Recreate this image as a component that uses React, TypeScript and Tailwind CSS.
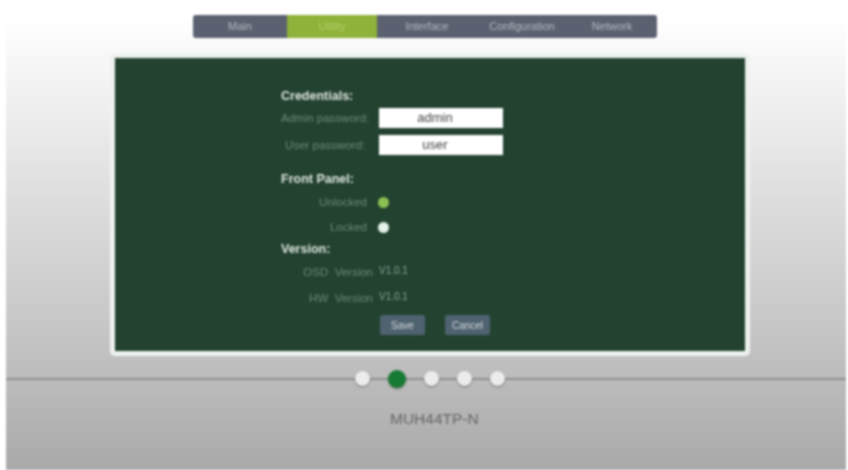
function Label({ children, width = 'w-[86px]' }: { children: React.ReactNode; width?: string }) {
    return <span className={`${width} whitespace-nowrap text-right text-[11.5px] leading-[17px] text-[#6f8a7a]`}>{children}</span>;
}

function Dot({ active }: { active?: boolean }) {
    return (
        <span
            className={
                active
                    ? 'h-[18px] w-[18px] rounded-full bg-[#177a34] shadow-[0_1px_2px_rgba(0,0,0,0.4)]'
                    : 'h-[15px] w-[15px] rounded-full bg-[#ececec] shadow-[0_1px_2px_rgba(0,0,0,0.4)]'
            }
        />
    );
}

export default function App() {
    return (
        <div className="h-[470px] w-[848px] overflow-hidden bg-white font-['Liberation_Sans',sans-serif]">
            <div className="ml-[6px] flex h-[470px] w-[840px] flex-col items-start bg-gradient-to-b from-[#ffffff] from-[4%] via-[#c6c6c6] via-[70%] to-[#a9a9a9] blur-[0.8px]">
                <nav className="ml-[187px] mt-[15px] flex h-[23px] w-[464px] rounded-[3px] bg-[#5b6170] text-[11px] text-[#b4b9c1]">
                    <span className="flex w-[94px] items-center justify-center">Main</span>
                    <span className="flex w-[90px] items-center justify-center bg-[#8fb23a] text-[#b2cf68]">Utility</span>
                    <span className="flex w-[100px] items-center justify-center">Interface</span>
                    <span className="flex w-[90px] items-center justify-center">Configuration</span>
                    <span className="flex w-[90px] items-center justify-center">Network</span>
                </nav>

                <main className="ml-[104px] mt-[15px] h-[303px] w-[640px] rounded-[5px] border-[5px] border-[#eef2ee] bg-[#234230]">
                    <div className="pl-[166px] pt-[31px]">
                        <h2 className="text-[12.5px] font-bold leading-[14px] text-[#dfe6e0]">Credentials:</h2>

                        <div className="mt-[5px] flex items-center">
                            <Label width="w-[84px]">Admin password:</Label>
                            <span className="ml-[14px] flex h-[20px] w-[124px] items-center justify-center bg-white pr-[12px] text-[13px] text-[#444]">admin</span>
                        </div>
                        <div className="mt-[7px] flex items-center">
                            <Label width="w-[84px]">User password:</Label>
                            <span className="ml-[14px] flex h-[20px] w-[124px] items-center justify-center bg-white pr-[12px] text-[13px] text-[#444]">user</span>
                        </div>

                        <h2 className="mt-[17px] text-[12.5px] font-bold leading-[14px] text-[#dfe6e0]">Front Panel:</h2>
                        <div className="mt-[8px] flex items-center">
                            <Label>Unlocked</Label>
                            <span className="ml-[11px] h-[11px] w-[11px] rounded-full bg-[#8cc152]" />
                        </div>
                        <div className="mt-[8px] flex items-center">
                            <Label>Locked</Label>
                            <span className="ml-[11px] h-[11px] w-[11px] rounded-full bg-[#e6f2ea]" />
                        </div>

                        <h2 className="mt-[6px] text-[12.5px] font-bold leading-[14px] text-[#dfe6e0]">Version:</h2>
                        <div className="mt-[7px] flex items-center">
                            <Label width="w-[92px]">OSD&nbsp; Version</Label>
                            <span className="mb-[4px] ml-[6px] text-[10px] text-[#8aa396]">V1.0.1</span>
                        </div>
                        <div className="mt-[7px] flex items-center">
                            <Label width="w-[92px]">HW&nbsp; Version</Label>
                            <span className="mb-[4px] ml-[6px] text-[10px] text-[#8aa396]">V1.0.1</span>
                        </div>

                        <div className="ml-[99px] mt-[7px] flex gap-[20px]">
                            <button className="h-[20px] w-[45px] rounded-[2px] bg-[#4f6270] text-[10px] text-[#d4dadd]">Save</button>
                            <button className="h-[20px] w-[45px] rounded-[2px] bg-[#4f6270] text-[10px] text-[#d4dadd]">Cancel</button>
                        </div>
                    </div>
                </main>

                <div className="relative mt-[12px] flex h-[21px] w-full items-center pl-[349px]">
                    <div className="absolute inset-x-0 top-[10px] h-[2px] bg-[#8e8e8e]" />
                    <div className="relative flex items-center gap-[18px]">
                        <Dot />
                        <Dot active />
                        <Dot />
                        <Dot />
                        <Dot />
                    </div>
                </div>

                <p className="ml-[384px] mt-[18px] text-[15.5px] text-[#666]">MUH44TP-N</p>
            </div>
        </div>
    );
}
